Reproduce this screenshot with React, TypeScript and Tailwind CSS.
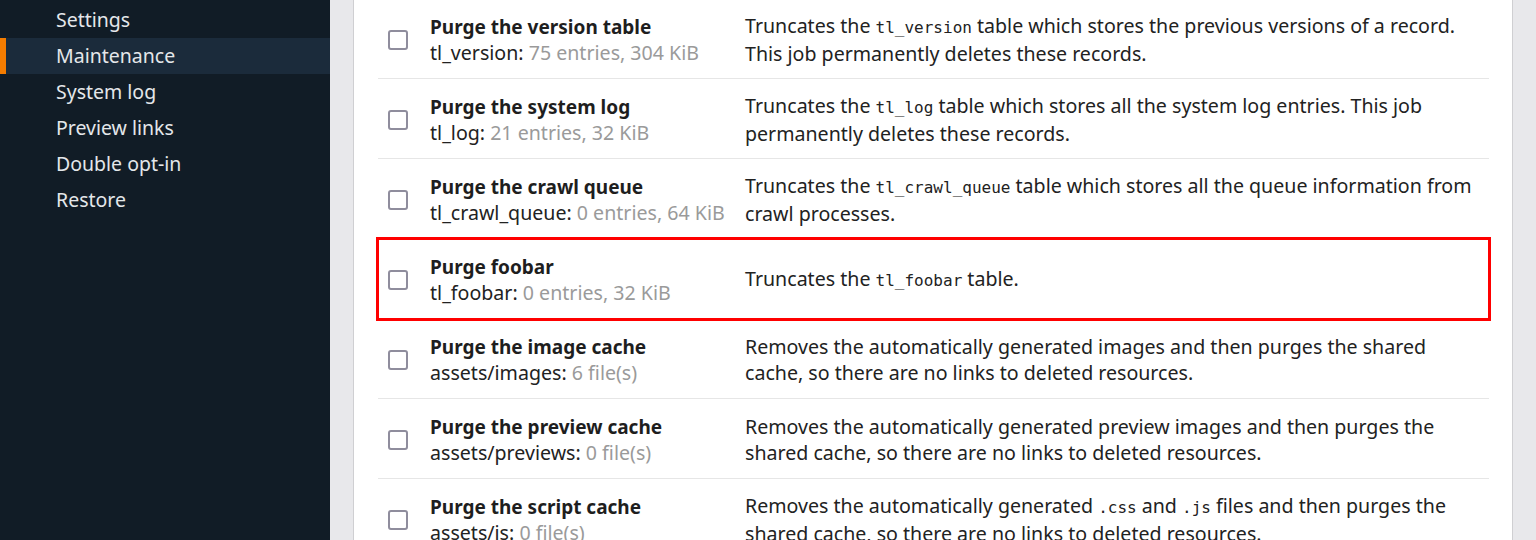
import React from "react";

type Job = {
  title: string;
  label: string;
  meta: string;
  desc: React.ReactNode;
  flagged?: boolean;
};

const Code = ({ children }: { children: React.ReactNode }) => (
  <code className="font-['DejaVu_Sans_Mono',monospace] text-[16px]">{children}</code>
);

const jobs: Job[] = [
  {
    title: "Purge the version table",
    label: "tl_version:",
    meta: "75 entries, 304 KiB",
    desc: (
      <>
        Truncates the <Code>tl_version</Code> table which stores the previous versions of a record. This job
        permanently deletes these records.
      </>
    ),
  },
  {
    title: "Purge the system log",
    label: "tl_log:",
    meta: "21 entries, 32 KiB",
    desc: (
      <>
        Truncates the <Code>tl_log</Code> table which stores all the system log entries. This job permanently
        deletes these records.
      </>
    ),
  },
  {
    title: "Purge the crawl queue",
    label: "tl_crawl_queue:",
    meta: "0 entries, 64 KiB",
    desc: (
      <>
        Truncates the <Code>tl_crawl_queue</Code> table which stores all the queue information from crawl
        processes.
      </>
    ),
  },
  {
    title: "Purge foobar",
    label: "tl_foobar:",
    meta: "0 entries, 32 KiB",
    desc: (
      <>
        Truncates the <Code>tl_foobar</Code> table.
      </>
    ),
    flagged: true,
  },
  {
    title: "Purge the image cache",
    label: "assets/images:",
    meta: "6 file(s)",
    desc: "Removes the automatically generated images and then purges the shared cache, so there are no links to deleted resources.",
  },
  {
    title: "Purge the preview cache",
    label: "assets/previews:",
    meta: "0 file(s)",
    desc: "Removes the automatically generated preview images and then purges the shared cache, so there are no links to deleted resources.",
  },
  {
    title: "Purge the script cache",
    label: "assets/js:",
    meta: "0 file(s)",
    desc: (
      <>
        Removes the automatically generated <Code>.css</Code> and <Code>.js</Code> files and then purges the
        shared cache, so there are no links to deleted resources.
      </>
    ),
  },
];

const navItems = ["Settings", "Maintenance", "System log", "Preview links", "Double opt-in", "Restore"];

function Sidebar() {
  return (
    <aside className="w-[330px] shrink-0 bg-[#111c26] pt-[2px]">
      {navItems.map((item) => {
        const active = item === "Maintenance";
        return (
          <div
            key={item}
            className={
              "flex h-[36px] items-center border-l-[6px] pl-[50px] text-[19.5px] text-[#e4e7ea] " +
              (active ? "border-[#f47c00] bg-[#1b2b3b]" : "border-transparent")
            }
          >
            {item}
          </div>
        );
      })}
    </aside>
  );
}

function JobRow({ job }: { job: Job }) {
  return (
    <div
      className={
        "flex h-[80px] items-center border-b border-[#e6e6e6] pt-[2px] " +
        (job.flagged ? "relative z-10 border-b-transparent outline-3 outline-[#ff0000] -outline-offset-1" : "")
      }
    >
      <div className="flex w-[52px] shrink-0 justify-start pl-[10px]">
        <span className="block h-[20px] w-[20px] rounded-[3px] border-2 border-[#8f8d9d] bg-white" />
      </div>
      <div className="w-[315px] shrink-0 leading-[25px]">
        <div className="text-[19px] font-bold text-[#1e1e1e]">{job.title}</div>
        <div className="text-[#222]">
          {job.label} <span className="text-[#9a9a9a]">{job.meta}</span>
        </div>
      </div>
      <div className="flex-1 pr-[12px] leading-[26px] text-[#222]">{job.desc}</div>
    </div>
  );
}

export default function App() {
  return (
    <div className="flex h-[540px] w-[1536px] overflow-hidden bg-[#e8e8eb] font-['Noto_Sans',sans-serif] text-[19.6px]">
      <Sidebar />
      <main className="flex flex-1 px-[23px]">
        <div className="h-[560px] flex-1 border-x border-[#cfcfd2] bg-white px-[24px] pr-[23px]">
          <div className="-mt-[1px]">
            {jobs.map((job) => (
              <JobRow key={job.title} job={job} />
            ))}
          </div>
        </div>
      </main>
    </div>
  );
}
